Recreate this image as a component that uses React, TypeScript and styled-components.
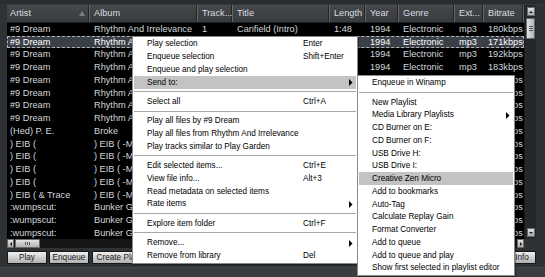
import React from 'react';
import styled, { createGlobalStyle } from 'styled-components';

const Global = createGlobalStyle`
  html, body { margin: 0; padding: 0; background: #2f3234; }
  body { font-family: "Liberation Sans", Arial, sans-serif; }
  * { box-sizing: border-box; }
`;

const COLS = '83px 108px 35px 97px 36px 33px 56px 29px 40px';

const Window = styled.div`
  position: relative;
  width: 545px;
  height: 277px;
  overflow: hidden;
  background: #2f3234;
  display: flex;
  flex-direction: column;
`;

const TopEdge = styled.div`
  flex: none;
  height: 5px;
  background: #2a2c2e;
  border-bottom: 1px solid #353839;
`;

const Body = styled.div`
  flex: none;
  display: flex;
  flex-direction: column;
  padding: 0 9px 0 7px;
`;

const ListFrame = styled.div`
  display: grid;
  grid-template-columns: 517px 12px;
  grid-template-rows: 234px 9px;
`;

const ListPane = styled.div`
  display: flex;
  flex-direction: column;
  background: #000;
  overflow: hidden;
`;

const Header = styled.div`
  flex: none;
  display: grid;
  grid-template-columns: ${COLS};
  height: 17.75px;
  background: linear-gradient(#46494c, #383b3e);
  border-bottom: 1px solid #1c1e20;
`;

const HeaderCell = styled.div<{ $first?: boolean }>`
  position: relative;
  display: flex;
  align-items: center;
  padding-left: ${(p) => (p.$first ? 3 : 4)}px;
  font-size: 9.2px;
  color: #dcdee0;
  white-space: nowrap;
  overflow: hidden;
  border-right: 1px solid #65686b;
  box-shadow: inset -2px 0 0 -1px #222;
`;

const SortArrow = styled.svg`
  position: absolute;
  right: 4px;
  top: 6px;
`;

const Rows = styled.div`
  flex: 1;
  overflow: hidden;
`;

const Row = styled.div<{ $selected?: boolean }>`
  display: grid;
  grid-template-columns: ${COLS};
  height: 12.75px;
  line-height: 12.75px;
  font-size: 9.2px;
  color: ${(p) => (p.$selected ? '#ffffff' : '#d2d7dc')};
  background: ${(p) => (p.$selected ? '#3b3f47' : 'transparent')};
  outline: ${(p) => (p.$selected ? '1px dashed #b4b4b4' : 'none')};
  outline-offset: -1px;
  white-space: nowrap;
`;

const Cell = styled.div<{ $first?: boolean }>`
  padding-left: ${(p) => (p.$first ? 3 : 4)}px;
  overflow: hidden;
`;

const VScroll = styled.div`
  display: flex;
  flex-direction: column;
  align-items: center;
  padding: 2px 0 2px 0;
  background: #25282a;
  border-left: 1px solid #1a1c1e;
`;

const ArrowBtn = styled.div<{ $w: number; $h: number }>`
  flex: none;
  width: ${(p) => p.$w}px;
  height: ${(p) => p.$h}px;
  display: flex;
  align-items: center;
  justify-content: center;
  background: linear-gradient(#e2e2e2, #a9a9a9);
  border: 1px solid #6a6a6a;
`;

const VThumb = styled.div`
  flex: none;
  width: 9px;
  height: 21px;
  margin-top: 2px;
  display: flex;
  flex-direction: column;
  align-items: center;
  justify-content: center;
  gap: 1px;
  background: linear-gradient(90deg, #e4e4e4, #b2b2b2);
  border: 1px solid #6a6a6a;
`;

const GripH = styled.div`
  width: 4px;
  height: 1px;
  background: #555;
`;

const Fill = styled.div`
  flex: 1;
`;

const HScroll = styled.div`
  display: flex;
  align-items: stretch;
  background: #141618;
`;

const HThumb = styled.div`
  flex: none;
  width: 25px;
  margin-left: 1px;
  display: flex;
  align-items: center;
  justify-content: center;
  gap: 1px;
  background: linear-gradient(#e4e4e4, #b2b2b2);
  border: 1px solid #6a6a6a;
`;

const GripV = styled.div`
  width: 1px;
  height: 3px;
  background: #555;
`;

const Corner = styled.div`
  background: #2f3234;
`;

const ButtonBar = styled.div`
  display: flex;
  align-items: stretch;
  height: 13.5px;
  margin-top: 2.5px;
`;

const Button = styled.div<{ $w: number; $gap?: number }>`
  flex: none;
  width: ${(p) => p.$w}px;
  margin-right: ${(p) => p.$gap ?? 2}px;
  display: flex;
  align-items: center;
  justify-content: center;
  font-size: 8.2px;
  color: #1a1a1a;
  background: linear-gradient(#f0f0f0, #b0b0b0);
  border: 1px solid #151515;
  border-radius: 1px;
  white-space: nowrap;
  overflow: hidden;
`;

const Spacer = styled.div`
  flex: 1;
`;

const BottomStrip = styled.div`
  flex: none;
  height: 10px;
  background: #3a3d40;
  border-top: 1px solid #44474a;
`;

const Menu = styled.div<{ $left: number; $top: number; $width: number }>`
  position: absolute;
  left: ${(p) => p.$left}px;
  top: ${(p) => p.$top}px;
  width: ${(p) => p.$width}px;
  background: #ffffff;
  border: 1px solid #8a8a8a;
  padding: 1px 0;
  box-shadow: 1px 1px 0 rgba(0, 0, 0, 0.35);
  font-size: 8.2px;
  color: #000;
`;

const Item = styled.div<{ $hl?: boolean; $text: number }>`
  position: relative;
  display: grid;
  grid-template-columns: ${(p) => p.$text}px 1fr;
  align-items: center;
  height: 12.75px;
  margin: 0 1px;
  padding-left: 13px;
  background: ${(p) => (p.$hl ? '#c3c3c3' : 'transparent')};
  white-space: nowrap;
`;

const SubArrow = styled.svg`
  position: absolute;
  right: 3px;
  top: 3.5px;
`;

const Separator = styled.div`
  height: 6.6px;
  margin: 0 1px;
  display: flex;
  flex-direction: column;
  justify-content: center;
`;

const SepLine = styled.div`
  height: 1px;
  background: #a6a6a6;
`;

type Track = {
  artist: string;
  album: string;
  track: string;
  title: string;
  length: string;
  year: string;
  genre: string;
  ext: string;
  bitrate: string;
};

const dream = (track: string, title: string, length: string, bitrate: string): Track => ({
  artist: '#9 Dream',
  album: 'Rhythm And Irrelevance',
  track,
  title,
  length,
  year: '1994',
  genre: 'Electronic',
  ext: 'mp3',
  bitrate,
});

const eib = (artist: string, track: string, title: string, bitrate: string): Track => ({
  artist,
  album: ') EIB ( -Mastering-',
  track,
  title,
  length: '4:12',
  year: '2001',
  genre: 'Electronic',
  ext: 'mp3',
  bitrate,
});

const wump = (track: string, title: string, bitrate: string): Track => ({
  artist: ':wumpscut:',
  album: 'Bunker Gate Seven',
  track,
  title,
  length: '5:02',
  year: '2000',
  genre: 'Industrial',
  ext: 'mp3',
  bitrate,
});

const TRACKS: Track[] = [
  dream('1', 'Canfield (Intro)', '1:48', '180kbps'),
  dream('2', 'Play Garden', '5:21', '171kbps'),
  dream('3', 'Sun Dial', '6:02', '192kbps'),
  dream('4', 'Out Of Phase', '4:47', '183kbps'),
  dream('5', 'Irrelevance', '5:36', '176kbps'),
  dream('6', 'Tranquil', '6:14', '188kbps'),
  dream('7', 'Night Watch', '4:58', '190kbps'),
  dream('8', 'Shapes', '5:09', '185kbps'),
  {
    artist: '(Hed) P. E.',
    album: 'Broke',
    track: '1',
    title: 'Killing Time',
    length: '3:27',
    year: '2000',
    genre: 'Rock',
    ext: 'mp3',
    bitrate: '192kbps',
  },
  eib(') EIB (', '1', 'Intro', '192kbps'),
  eib(') EIB (', '2', 'Cyclone', '192kbps'),
  eib(') EIB (', '3', 'Silent Sky', '192kbps'),
  eib(') EIB (', '4', 'Visions', '192kbps'),
  eib(') EIB ( & Trace', '5', 'Dead Zone', '192kbps'),
  wump('1', 'Die Liebe', '160kbps'),
  wump('2', 'Ich Will Dich', '160kbps'),
  wump('3', 'Wreath Of Barbs', '160kbps'),
];

type MenuEntry =
  | { sep: true }
  | { sep?: false; label: string; key?: string; sub?: boolean; hl?: boolean };

const MAIN_MENU: MenuEntry[] = [
  { label: 'Play selection', key: 'Enter' },
  { label: 'Enqueue selection', key: 'Shift+Enter' },
  { label: 'Enqueue and play selection' },
  { label: 'Send to:', sub: true, hl: true },
  { sep: true },
  { label: 'Select all', key: 'Ctrl+A' },
  { sep: true },
  { label: 'Play all files by #9 Dream' },
  { label: 'Play all files from Rhythm And Irrelevance' },
  { label: 'Play tracks similar to Play Garden' },
  { sep: true },
  { label: 'Edit selected items...', key: 'Ctrl+E' },
  { label: 'View file info...', key: 'Alt+3' },
  { label: 'Read metadata on selected items' },
  { label: 'Rate items', sub: true },
  { sep: true },
  { label: 'Explore item folder', key: 'Ctrl+F' },
  { sep: true },
  { label: 'Remove...', sub: true },
  { label: 'Remove from library', key: 'Del' },
];

const SEND_MENU: MenuEntry[] = [
  { label: 'Enqueue in Winamp' },
  { sep: true },
  { label: 'New Playlist' },
  { label: 'Media Library Playlists', sub: true },
  { label: 'CD Burner on E:' },
  { label: 'CD Burner on F:' },
  { label: 'USB Drive H:' },
  { label: 'USB Drive I:' },
  { label: 'Creative Zen Micro', hl: true },
  { label: 'Add to bookmarks' },
  { label: 'Auto-Tag' },
  { label: 'Calculate Replay Gain' },
  { label: 'Format Converter' },
  { label: 'Add to queue' },
  { label: 'Add to queue and play' },
  { label: 'Show first selected in playlist editor' },
];

const Tri: React.FC<{ dir: 'up' | 'down' | 'left' | 'right'; size?: number; color?: string }> = ({
  dir,
  size = 4,
  color = '#1a1a1a',
}) => {
  const s = size;
  const pts =
    dir === 'up'
      ? `0,${s / 2} ${s},${s / 2} ${s / 2},0`
      : dir === 'down'
      ? `0,0 ${s},0 ${s / 2},${s / 2}`
      : dir === 'left'
      ? `${s / 2},0 ${s / 2},${s} 0,${s / 2}`
      : `0,0 0,${s} ${s / 2},${s / 2}`;
  const w = dir === 'up' || dir === 'down' ? s : s / 2;
  const h = dir === 'up' || dir === 'down' ? s / 2 : s;
  return (
    <svg width={w} height={h} viewBox={`0 0 ${w} ${h}`}>
      <polygon points={pts} fill={color} />
    </svg>
  );
};

const ContextMenu: React.FC<{
  entries: MenuEntry[];
  left: number;
  top: number;
  width: number;
  textCol: number;
}> = ({ entries, left, top, width, textCol }) => (
  <Menu $left={left} $top={top} $width={width}>
    {entries.map((e, i) =>
      e.sep ? (
        <Separator key={i}>
          <SepLine />
        </Separator>
      ) : (
        <Item key={i} $hl={e.hl} $text={textCol}>
          <span>{e.label}</span>
          <span>{e.key ?? ''}</span>
          {e.sub && (
            <SubArrow width="4" height="7" viewBox="0 0 4 7">
              <polygon points="0,0 0,7 3.5,3.5" fill="#000" />
            </SubArrow>
          )}
        </Item>
      )
    )}
  </Menu>
);

const HEADERS = ['Artist', 'Album', 'Track...', 'Title', 'Length', 'Year', 'Genre', 'Ext...', 'Bitrate'];

export default function App() {
  return (
    <>
      <Global />
      <Window>
        <TopEdge />
        <Body>
          <ListFrame>
            <ListPane>
              <Header>
                {HEADERS.map((h, i) => (
                  <HeaderCell key={h} $first={i === 0}>
                    {h}
                    {i === 0 && (
                      <SortArrow width="6" height="5" viewBox="0 0 6 5">
                        <polygon points="0,5 6,5 3,0" fill="#7c7f82" />
                      </SortArrow>
                    )}
                  </HeaderCell>
                ))}
              </Header>
              <Rows>
                {TRACKS.map((t, i) => (
                  <Row key={i} $selected={i === 1}>
                    <Cell $first>{t.artist}</Cell>
                    <Cell>{t.album}</Cell>
                    <Cell>{t.track}</Cell>
                    <Cell>{t.title}</Cell>
                    <Cell>{t.length}</Cell>
                    <Cell>{t.year}</Cell>
                    <Cell>{t.genre}</Cell>
                    <Cell>{t.ext}</Cell>
                    <Cell>{t.bitrate}</Cell>
                  </Row>
                ))}
              </Rows>
            </ListPane>
            <VScroll>
              <ArrowBtn $w={8} $h={9}>
                <Tri dir="up" />
              </ArrowBtn>
              <VThumb>
                <GripH />
                <GripH />
                <GripH />
              </VThumb>
              <Fill />
              <ArrowBtn $w={8} $h={9}>
                <Tri dir="down" />
              </ArrowBtn>
            </VScroll>
            <HScroll>
              <ArrowBtn $w={7} $h={9}>
                <Tri dir="left" />
              </ArrowBtn>
              <HThumb>
                <GripV />
                <GripV />
                <GripV />
              </HThumb>
              <Fill />
              <ArrowBtn $w={7} $h={9}>
                <Tri dir="right" />
              </ArrowBtn>
            </HScroll>
            <Corner />
          </ListFrame>
          <ButtonBar>
            <Button $w={40}>Play</Button>
            <Button $w={40} $gap={3}>Enqueue</Button>
            <Button $w={62}>Create Playlist</Button>
            <Spacer />
            <Button $w={28} $gap={0}>Info</Button>
          </ButtonBar>
        </Body>
        <Spacer />
        <BottomStrip />
        <ContextMenu entries={MAIN_MENU} left={132} top={35.5} width={226} textCol={156} />
        <ContextMenu entries={SEND_MENU} left={357} top={74.5} width={158} textCol={130} />
      </Window>
    </>
  );
}
